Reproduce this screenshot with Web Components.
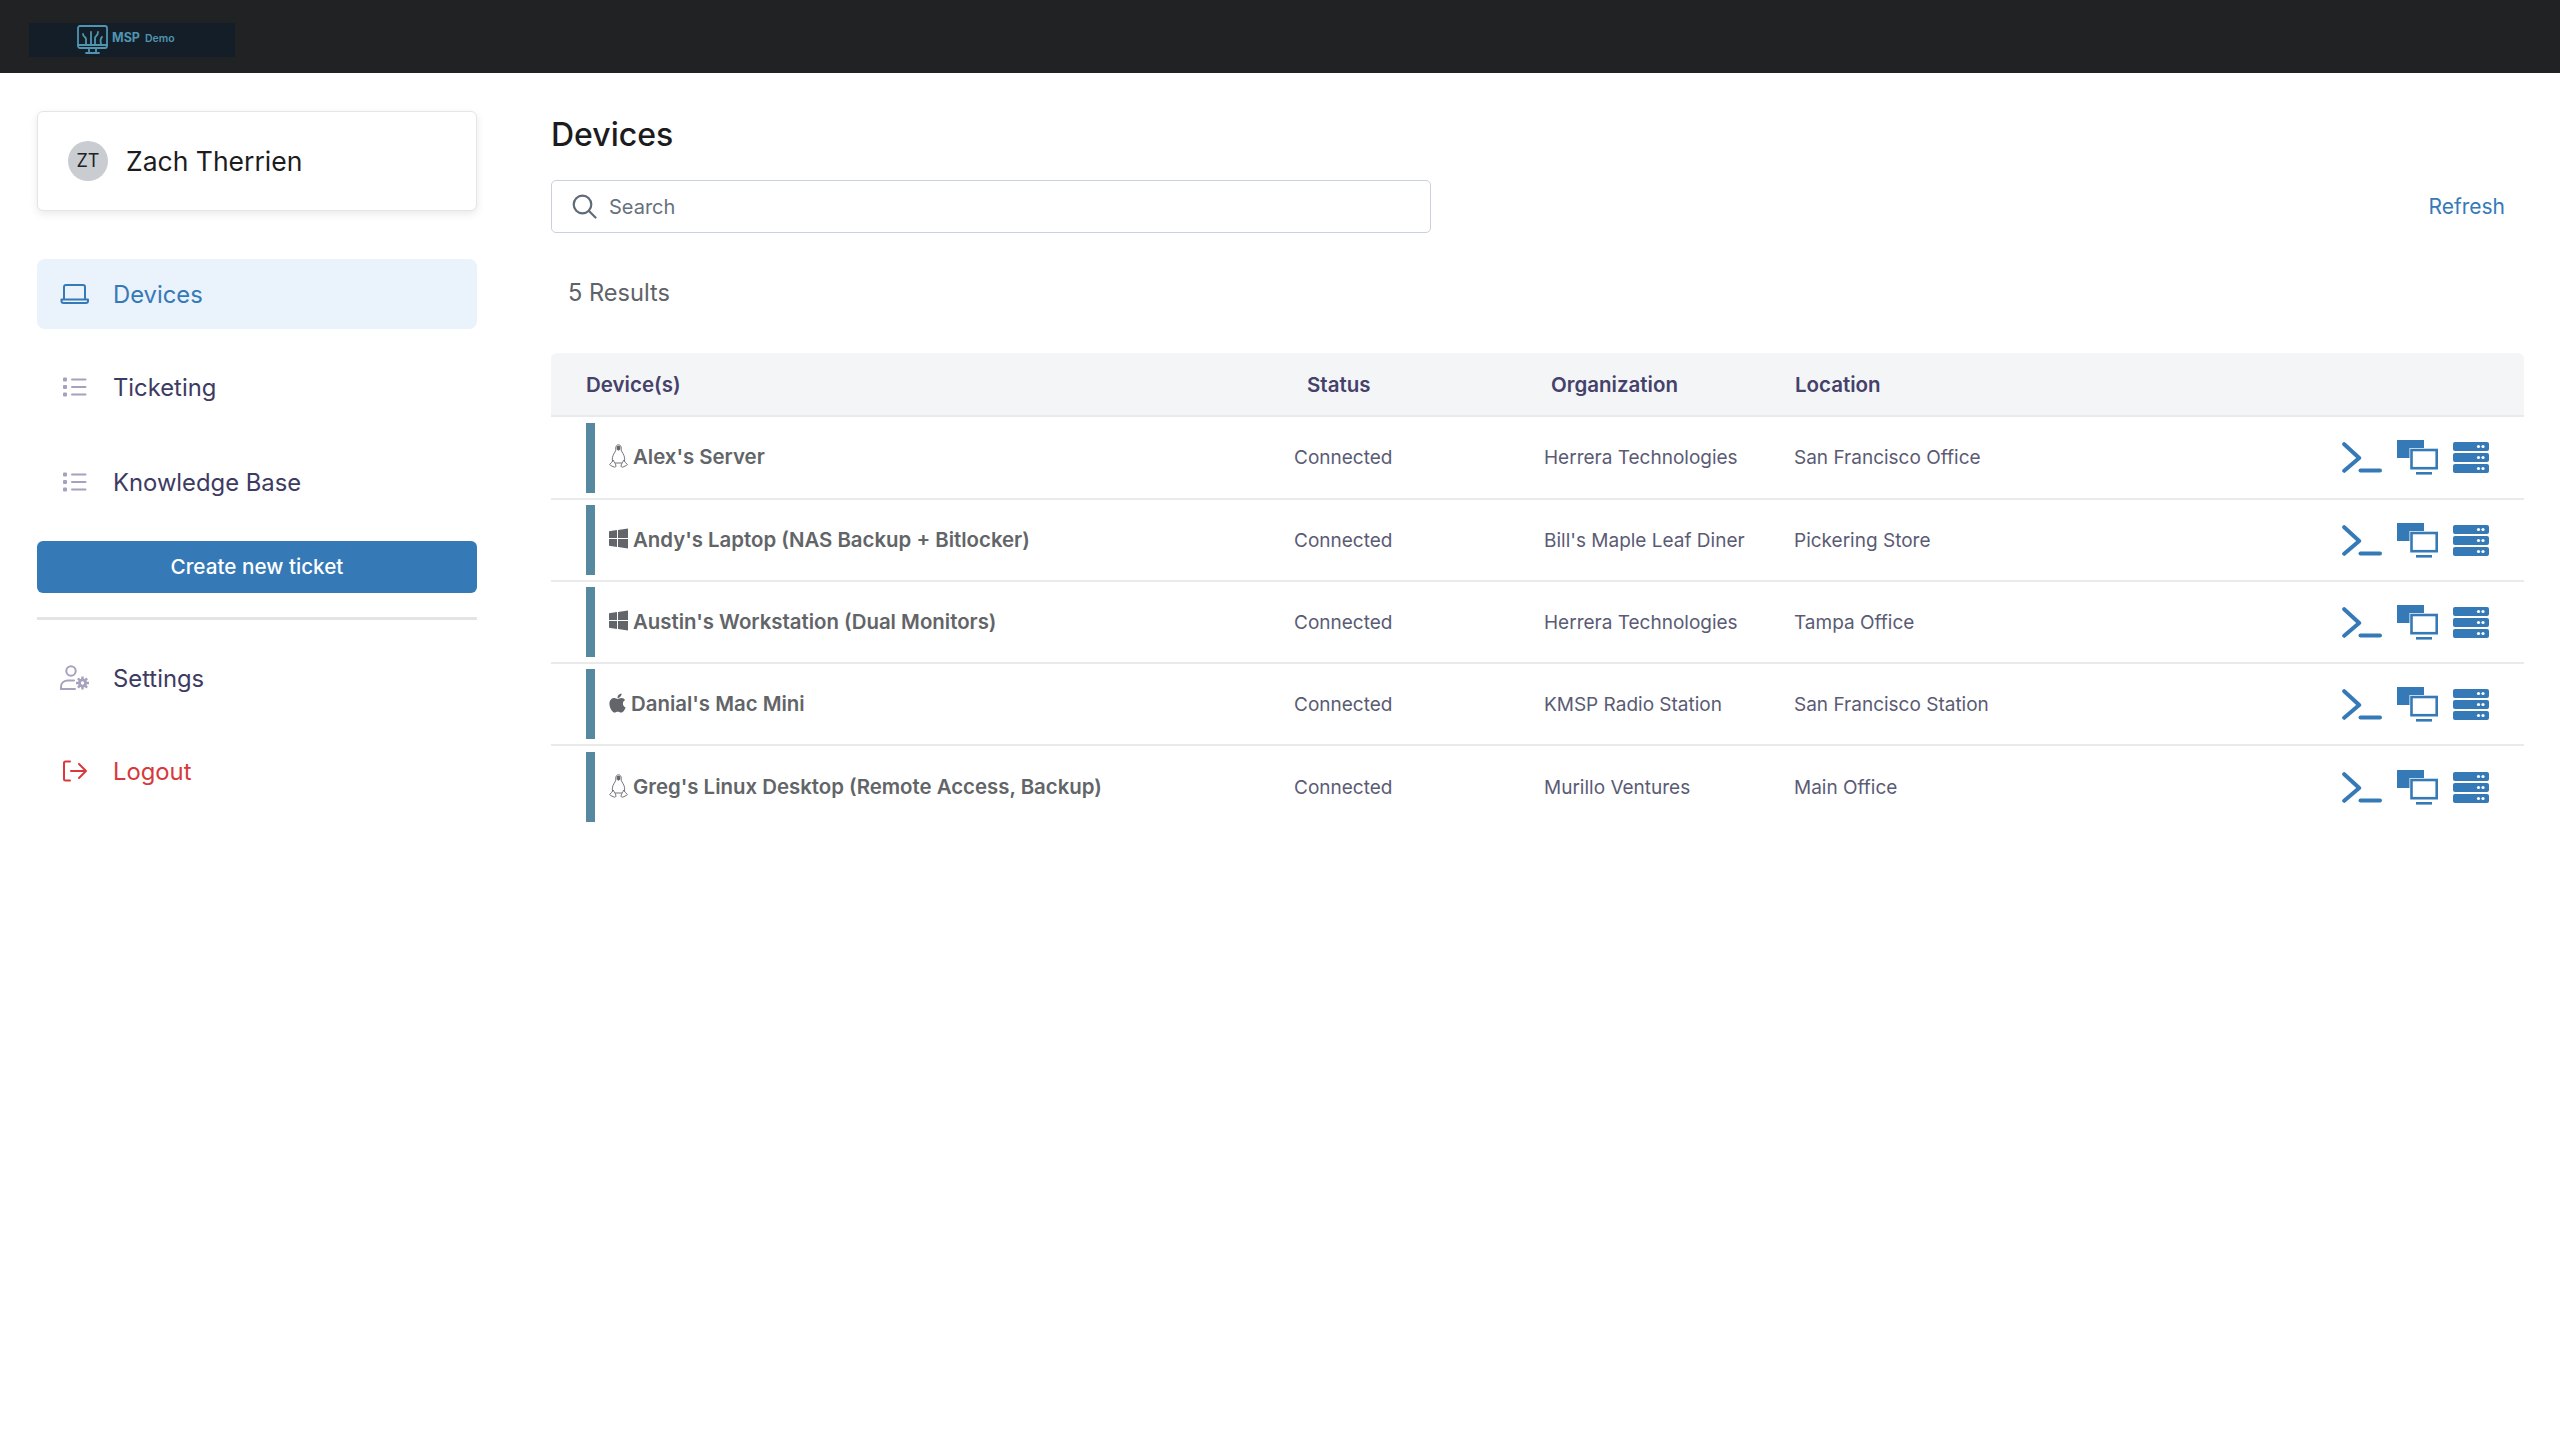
<!DOCTYPE html>
<html lang="en">
<head>
<meta charset="utf-8">
<title>Devices</title>
<style>
  html, body { margin: 0; height: 100%; background: #fff; font-family: Inter, "Liberation Sans", sans-serif; }
</style>
</head>
<body>
<app-shell>
  <top-bar slot="top"></top-bar>
  <side-bar slot="side">
    <user-card name="Zach Therrien" initials="ZT"></user-card>
    <nav-item icon="laptop" active style="margin-top:48px">Devices</nav-item>
    <nav-item icon="list" style="margin-top:23px">Ticketing</nav-item>
    <nav-item icon="list" style="margin-top:25px">Knowledge Base</nav-item>
    <new-ticket-button style="margin-top:24px">Create new ticket</new-ticket-button>
    <side-divider></side-divider>
    <nav-item icon="settings">Settings</nav-item>
    <nav-item icon="logout" danger style="margin-top:23px">Logout</nav-item>
  </side-bar>
  <devices-page slot="main"></devices-page>
</app-shell>

<script>
const ICONS = {
  laptop: `<svg width="30" height="22" viewBox="0 0 30 22" fill="none" stroke="currentColor" stroke-width="2" stroke-linejoin="round" stroke-linecap="round"><path d="M4 16V4a2 2 0 0 1 2-2h17a2 2 0 0 1 2 2v12"/><path d="M1.5 16.5h26.5v1.5a2 2 0 0 1-2 2H3.5a2 2 0 0 1-2-2z"/></svg>`,
  list: `<svg width="24" height="20" viewBox="0 0 24 20" fill="#a5a2bd"><rect x="0" y="0.5" width="4" height="4" rx="1"/><rect x="0" y="8" width="4" height="4" rx="1"/><rect x="0" y="15.5" width="4" height="4" rx="1"/><rect x="8" y="1.5" width="15.500" height="2" rx="1"/><rect x="8" y="9" width="15.500" height="2" rx="1"/><rect x="8" y="16.500" width="15.500" height="2" rx="1"/></svg>`,
  settings: `<svg width="30" height="26" viewBox="0 0 30 26" fill="none"><circle cx="11" cy="6" r="4.700" stroke="#a5a2bd" stroke-width="2"/><path d="M1 24v-2c0-4 3-6.500 7-6.500h6" stroke="#a5a2bd" stroke-width="2" stroke-linecap="round"/><path d="M1 24h14" stroke="#a5a2bd" stroke-width="2" stroke-linecap="round"/><circle cx="22.500" cy="18" r="4.500" fill="#a5a2bd"/><path d="M22.500 11.500v13M16 18h13M17.900 13.400l9.200 9.200M27.100 13.400l-9.200 9.200" stroke="#a5a2bd" stroke-width="2.400"/><circle cx="22.500" cy="18" r="1.700" fill="#fff"/></svg>`,
  logout: `<svg width="26" height="22" viewBox="0 0 26 22" fill="none" stroke="#d9393c" stroke-width="2" stroke-linecap="round" stroke-linejoin="round"><path d="M8 1.500H3.500a1.500 1.500 0 0 0-1.500 1.500v16a1.500 1.500 0 0 0 1.500 1.500H8"/><path d="M9 11h15M17 4l7 7-7 7"/></svg>`,
  linux: `<svg width="19" height="24" viewBox="0 0 19 24" fill="#fff" stroke="#62656a" stroke-width="0.900" stroke-linejoin="round"><path d="M9.500 .8C7.600.8 6.800 2.300 6.800 4c0 1.700.1 2.500-.8 3.900C4.500 10.200 3.300 12.600 3.300 15.100c0 1.500.4 2.900 1.100 3.900h10.200c.7-1 1.100-2.400 1.100-3.900 0-2.500-1.200-4.900-2.700-7.200-.9-1.400-.8-2.200-.8-3.900 0-1.700-.8-3.200-2.700-3.200z"/><path d="M7.900 2.400c.3-1 2.900-1 3.200 0 .2.900.2 2 .1 3.100L9.500 6.700 7.800 5.500c-.1-1.100-.1-2.200.1-3.100z" fill="#62656a" stroke="none"/><path d="M4.300 16.200c-1 1.800-2.600 3-3.400 4-.4.600 0 1.100.8 1.300l3.500 1.600c1 .3 1.700-.2 1.700-1.100 0-1.500-.7-2.500-1.500-3.600zM14.700 16.200c1 1.800 2.600 3 3.400 4 .4.600 0 1.100-.8 1.300l-3.500 1.600c-1 .3-1.700-.2-1.700-1.100 0-1.500.7-2.500 1.500-3.600z"/></svg>`,
  windows: `<svg width="19" height="21" viewBox="0 0 19 21" fill="#62656a"><path d="M0 3.200l8-1.100V10H0zM9 1.900L19 .5V10H9zM0 11h8v7.900l-8-1.100zM9 11h10v9.500l-10-1.400z"/></svg>`,
  apple: `<svg width="17" height="22" viewBox="0 0 384 512" fill="#62656a"><path d="M318.7 268.7c-.2-36.700 16.400-64.400 50-84.800-18.800-26.900-47.200-41.700-84.700-44.600-35.500-2.800-74.300 20.700-88.500 20.700-15 0-49.400-19.700-76.400-19.700C63.300 141.200 4 184.800 4 273.500q0 39.300 14.400 81.200c12.800 36.700 59 126.700 107.200 125.200 25.200-.6 43-17.900 75.800-17.900 31.800 0 48.300 17.900 76.400 17.900 48.600-.7 90.400-82.500 102.600-119.300-65.200-30.700-61.700-90-61.700-91.900zm-56.600-164.200c27.300-32.400 24.800-61.900 24-72.500-24.100 1.400-52 16.400-67.900 34.900-17.500 19.800-27.800 44.300-25.600 71.900 26.100 2 49.900-11.400 69.500-34.300z"/></svg>`,
  terminal: `<svg width="40" height="31" viewBox="0 0 40 31" fill="none" stroke="#357ab7" stroke-width="4" stroke-linecap="round" stroke-linejoin="round"><path d="M2.200 2.200l15 13.800-15 12.800"/><path d="M18.500 28.500h19.500"/></svg>`,
  screens: `<svg width="41" height="35" viewBox="0 0 41 35"><rect x="0" y="0" width="27" height="18" fill="#357ab7"/><rect x="12.500" y="8" width="28.500" height="21.500" fill="#fff"/><rect x="14.500" y="10" width="25.200" height="18.200" fill="#fff" stroke="#357ab7" stroke-width="2.600"/><rect x="19" y="32" width="16" height="2.600" fill="#357ab7"/></svg>`,
  server: `<svg width="36" height="31" viewBox="0 0 36 31"><g fill="#357ab7"><rect width="36" height="9" rx="2" y="0"/><rect width="36" height="9" rx="2" y="11"/><rect width="36" height="9" rx="2" y="22"/></g><g fill="#fff"><circle cx="25.500" cy="4.500" r="1.600"/><circle cx="30" cy="4.500" r="1.600"/><circle cx="25.500" cy="15.500" r="1.600"/><circle cx="30" cy="15.500" r="1.600"/><circle cx="25.500" cy="26.500" r="1.600"/><circle cx="30" cy="26.500" r="1.600"/></g></svg>`
};

class AppShell extends HTMLElement {
  constructor() {
    super();
    this.attachShadow({ mode: 'open' });
    this.shadowRoot.innerHTML = `
      <style>
        :host { display: flex; flex-direction: column; min-height: 100vh; }
        #body { display: flex; padding: 38px 36px 0 37px; gap: 74px; }
        ::slotted([slot="side"]) { flex: 0 0 440px; }
        ::slotted([slot="main"]) { flex: 1; min-width: 0; }
      </style>
      <slot name="top"></slot>
      <div id="body">
        <slot name="side"></slot>
        <slot name="main"></slot>
      </div>`;
  }
}

class TopBar extends HTMLElement {
  constructor() {
    super();
    this.attachShadow({ mode: 'open' });
    this.shadowRoot.innerHTML = `
      <style>
        :host { display: flex; align-items: center; height: 73px; background: #212224; padding-left: 29px; box-sizing: border-box; }
        #logo { display: flex; align-items: center; width: 206px; height: 34px; margin-top: 7px; background: #141e28; color: #4f95b0; padding-left: 48px; box-sizing: border-box; }
        svg { flex: none; }
        b { font-size: 12.500px; font-weight: 700; margin-left: 4px; margin-top: -5px; }
        span { font-size: 10.500px; font-weight: 600; margin-left: 5px; margin-top: -4px; }
      </style>
      <div id="logo">
        <svg width="31" height="30" viewBox="0 0 31 30" fill="none" stroke="#4f95b0" stroke-width="1.800" stroke-linecap="round">
          <rect x="1" y="1" width="29" height="22" rx="2"/>
          <path d="M1 20h29M12 24v3M19 24v3M9 28h13"/>
          <path d="M9 19v-5c0-2-3-2-3-5M14 19v-12M18 19v-6c0-2 3-2 3-6M24 19c-1-4 0-6 1-7"/>
        </svg>
        <b>MSP</b><span>Demo</span>
      </div>`;
  }
}

class SideBar extends HTMLElement {
  constructor() {
    super();
    this.attachShadow({ mode: 'open' });
    this.shadowRoot.innerHTML = `
      <style>:host { display: flex; flex-direction: column; }</style>
      <slot></slot>`;
  }
}

class UserCard extends HTMLElement {
  constructor() {
    super();
    this.attachShadow({ mode: 'open' });
    this.shadowRoot.innerHTML = `
      <style>
        :host { display: flex; align-items: center; gap: 18px; height: 100px; box-sizing: border-box; padding-left: 30px;
          border: 1px solid #e3e5e8; border-radius: 6px; background: #fff; box-shadow: 0 3px 8px rgba(0,0,0,.09); }
        #avatar { width: 40px; height: 40px; border-radius: 50%; background: #c9ccd1; color: #212224; font-size: 18px;
          display: flex; align-items: center; justify-content: center; padding-bottom: 2px; box-sizing: border-box; }
        #name { font-size: 26.500px; color: #1c1c1e; }
      </style>
      <div id="avatar">${this.getAttribute('initials')}</div>
      <div id="name">${this.getAttribute('name')}</div>`;
  }
}

class NavItem extends HTMLElement {
  constructor() {
    super();
    this.attachShadow({ mode: 'open' });
    this.shadowRoot.innerHTML = `
      <style>
        :host { display: flex; align-items: center; height: 70px; border-radius: 8px; color: #3e3b63; font-size: 23.800px; }
        :host([active]) { background: #eaf2fb; color: #357ab7; }
        :host([danger]) { color: #d9393c; }
        #icon { width: 76px; display: flex; justify-content: center; box-sizing: border-box; flex: none; }
      </style>
      <div id="icon">${ICONS[this.getAttribute('icon')]}</div>
      <slot></slot>`;
  }
}

class NewTicketButton extends HTMLElement {
  constructor() {
    super();
    this.attachShadow({ mode: 'open' });
    this.shadowRoot.innerHTML = `
      <style>
        :host { display: flex; align-items: center; justify-content: center; height: 52px; box-sizing: border-box; padding-bottom: 2px; border-radius: 6px;
          background: #357ab7; color: #fff; font-size: 20.700px; font-weight: 500; }
      </style>
      <slot></slot>`;
  }
}

class SideDivider extends HTMLElement {
  constructor() {
    super();
    this.attachShadow({ mode: 'open' });
    this.shadowRoot.innerHTML = `
      <style>:host { display: block; height: 3px; background: #e3e4e6; margin: 24px 0 23px; }</style>`;
  }
}

class SearchBox extends HTMLElement {
  constructor() {
    super();
    this.attachShadow({ mode: 'open' });
    this.shadowRoot.innerHTML = `
      <style>
        :host { display: flex; align-items: center; gap: 12px; width: 880px; height: 53px; box-sizing: border-box; padding-left: 20px;
          border: 1.500px solid #c9d1da; border-radius: 5px; color: #66717d; font-size: 20px; }
      </style>
      <svg width="25" height="25" viewBox="0 0 25 25" fill="none" stroke="#5f6b76" stroke-width="2.200" stroke-linecap="round"><circle cx="10.500" cy="10.500" r="8.800"/><path d="M17 17l6.500 6.500"/></svg>
      <span>Search</span>`;
  }
}

class DeviceRow extends HTMLElement {
  constructor() {
    super();
    this.attachShadow({ mode: 'open' });
    const a = n => this.getAttribute(n);
    this.shadowRoot.innerHTML = `
      <style>
        :host { display: grid; grid-template-columns: 743px 250px 250px 1fr auto; align-items: center; height: 82px;
          box-sizing: border-box; border-bottom: 2px solid #e9eaec; padding-right: 35px; color: #5a5b74; font-size: 19px; }
        :host([first]) { height: 83px; }
        :host([last]) { border-bottom: 0; }
        #dev { display: flex; align-items: center; padding-left: 35px; }
        #bar { width: 9px; height: 70px; background: #56899f; margin-right: 14px; flex: none; }
        #os { flex: none; display: flex; margin-right: 5px; margin-top: -3px; }
        #name { color: #626568; font-size: 20.400px; font-weight: 600; margin-top: -2px; }
        #acts { display: flex; align-items: center; gap: 15px; }
      </style>
      <div id="dev">
        <div id="bar"></div>
        <div id="os">${ICONS[a('os')]}</div>
        <div id="name">${a('name')}</div>
      </div>
      <div>${a('status')}</div>
      <div>${a('org')}</div>
      <div>${a('loc')}</div>
      <div id="acts">${ICONS.terminal}${ICONS.screens}${ICONS.server}</div>`;
  }
}

class DevicesPage extends HTMLElement {
  constructor() {
    super();
    this.attachShadow({ mode: 'open' });
    this.shadowRoot.innerHTML = `
      <style>
        :host { display: block; }
        h1 { margin: 4px 0 0; font-size: 32px; font-weight: 500; line-height: 40px; color: #1c1c1e; }
        #tools { display: flex; align-items: center; justify-content: space-between; margin-top: 25px; padding-right: 19px; }
        #refresh { color: #357ab7; font-size: 21px; }
        #count { margin: 44px 0 0 17px; font-size: 23.600px; line-height: 32px; color: #5f6368; }
        #head { display: grid; grid-template-columns: 721px 244px 244px 1fr; align-items: center; height: 64px; box-sizing: border-box;
          margin-top: 44px; padding-left: 35px; background: #f4f5f7; border-bottom: 2px solid #e9eaec; border-radius: 6px 6px 0 0;
          color: #45416b; font-size: 20.500px; font-weight: 600; }
      </style>
      <h1>Devices</h1>
      <div id="tools"><search-box></search-box><span id="refresh">Refresh</span></div>
      <div id="count">5 Results</div>
      <div id="head"><span>Device(s)</span><span>Status</span><span>Organization</span><span>Location</span></div>
      <device-row first os="linux" name="Alex's Server" status="Connected" org="Herrera Technologies" loc="San Francisco Office"></device-row>
      <device-row os="windows" name="Andy's Laptop (NAS Backup + Bitlocker)" status="Connected" org="Bill's Maple Leaf Diner" loc="Pickering Store"></device-row>
      <device-row os="windows" name="Austin's Workstation (Dual Monitors)" status="Connected" org="Herrera Technologies" loc="Tampa Office"></device-row>
      <device-row os="apple" name="Danial's Mac Mini" status="Connected" org="KMSP Radio Station" loc="San Francisco Station"></device-row>
      <device-row last os="linux" name="Greg's Linux Desktop (Remote Access, Backup)" status="Connected" org="Murillo Ventures" loc="Main Office"></device-row>`;
  }
}

customElements.define('app-shell', AppShell);
customElements.define('top-bar', TopBar);
customElements.define('side-bar', SideBar);
customElements.define('user-card', UserCard);
customElements.define('nav-item', NavItem);
customElements.define('new-ticket-button', NewTicketButton);
customElements.define('side-divider', SideDivider);
customElements.define('search-box', SearchBox);
customElements.define('device-row', DeviceRow);
customElements.define('devices-page', DevicesPage);
</script>
</body>
</html>
